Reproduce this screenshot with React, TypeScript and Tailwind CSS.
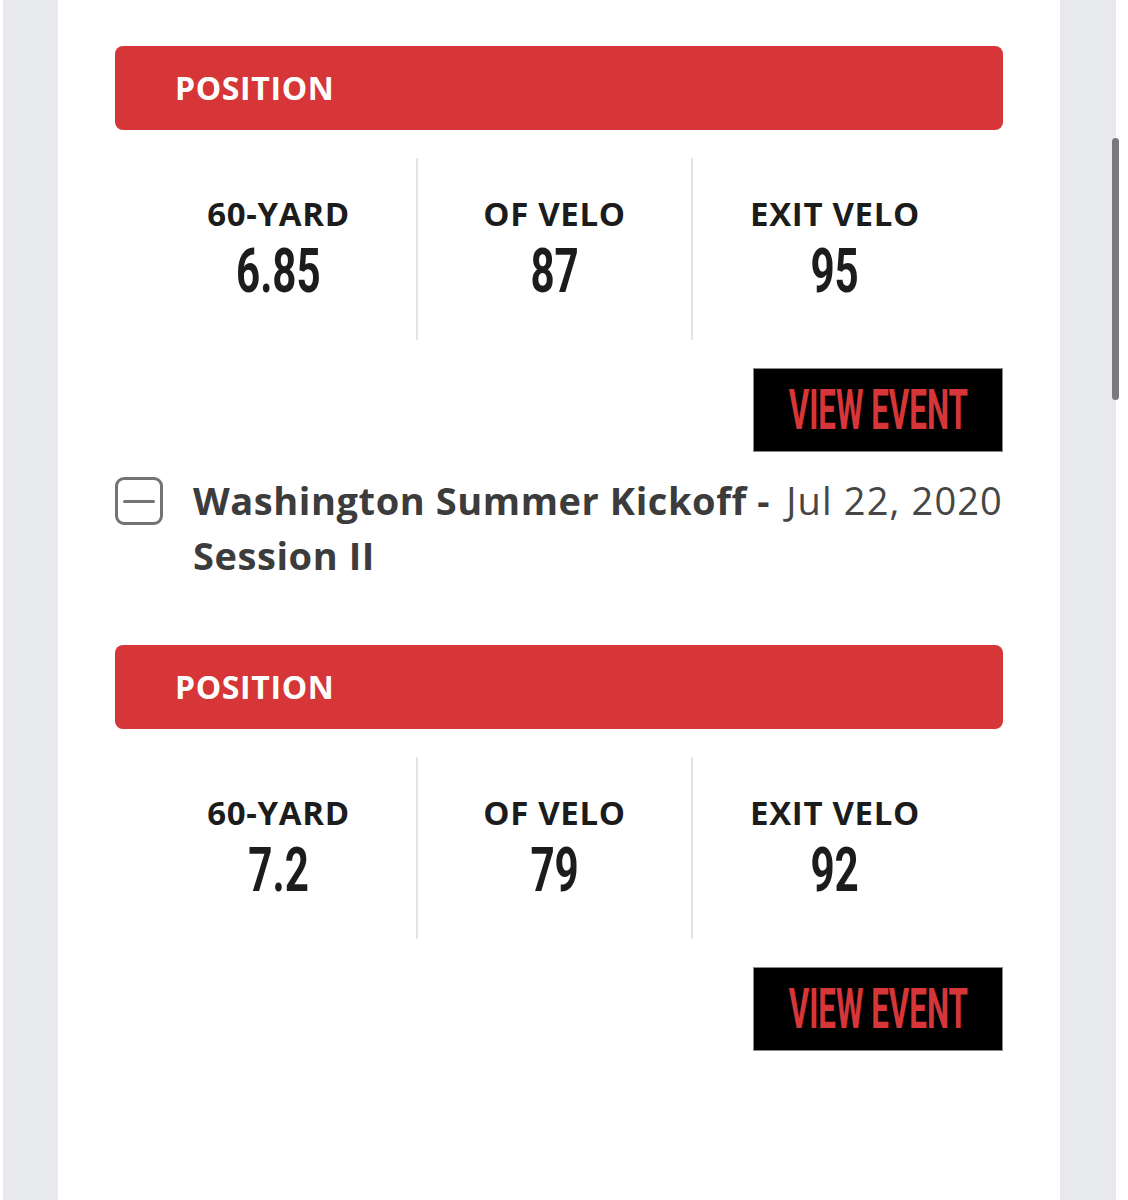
import React from 'react'

type Stat = { label: string; value: string }

type EventBlock = {
  stats: Stat[]
  title?: string
  date?: string
}

const blocks: EventBlock[] = [
  {
    stats: [
      { label: '60-YARD', value: '6.85' },
      { label: 'OF VELO', value: '87' },
      { label: 'EXIT VELO', value: '95' },
    ],
    title: 'Washington Summer Kickoff\u00a0- Session II',
    date: 'Jul 22, 2020',
  },
  {
    stats: [
      { label: '60-YARD', value: '7.2' },
      { label: 'OF VELO', value: '79' },
      { label: 'EXIT VELO', value: '92' },
    ],
  },
]

const sans = "font-['Open_Sans',_'Liberation_Sans',_sans-serif]"
const condensed = "font-['Roboto',_'Liberation_Sans',_sans-serif]"

function StatColumn({ stat, first, last }: { stat: Stat; first?: boolean; last?: boolean }) {
  return (
    <div
      className={
        (last ? 'flex-1 ' : 'w-[275px] ') +
        (first ? '' : 'border-l-2 border-[#e4e4e4] ') +
        'flex flex-col items-center pt-[38px]'
      }
    >
      <div className={`${sans} text-[33px] leading-[36px] font-bold tracking-[0.02em] text-[#1c1c1c]`}>
        {stat.label}
      </div>
      <div className="mt-[15px] h-[48px] flex justify-center">
        <span
          className={`${condensed} inline-block text-[62px] leading-[48px] font-bold text-[#1c1c1c] scale-x-[0.68]`}
        >
          {stat.value}
        </span>
      </div>
    </div>
  )
}

function Block({ block }: { block: EventBlock }) {
  return (
    <div className="flex flex-col">
      {/* красная плашка позиции */}
      <div className="h-[84px] rounded-lg bg-[#d63638] flex items-center pl-[60px]">
        <span className={`${sans} text-[32px] font-bold tracking-[0.02em] text-white leading-none`}>POSITION</span>
      </div>

      {/* показатели */}
      <div className="mt-[28px] h-[182px] flex pl-[26px] pr-[26px]">
        {block.stats.map((s, i) => (
          <StatColumn key={s.label} stat={s} first={i === 0} last={i === block.stats.length - 1} />
        ))}
      </div>

      <div className="mt-[28px] flex justify-end">
        <button className="w-[250px] h-[84px] bg-black border border-[#8a8a8a] flex items-center justify-center overflow-hidden">
          <span
            className={`${condensed} inline-block text-[55px] leading-none font-bold text-[#d63638] scale-x-[0.57] whitespace-nowrap`}
          >
            VIEW EVENT
          </span>
        </button>
      </div>

      {block.title && (
        <div className="mt-[21px] flex items-start">
          <div className="mt-[4px] w-[48px] h-[48px] shrink-0 border-[3px] border-[#737373] rounded-[9px] flex items-center justify-center">
            <div className="w-[32px] h-[3px] rounded-full bg-[#737373]" />
          </div>
          <div
            className={`${sans} ml-[30px] flex-1 text-[38px] leading-[55px] font-bold tracking-[0.015em] text-[#3c3c3c]`}
          >
            {block.title}
          </div>
          <div
            className={`${sans} shrink-0 text-[38px] leading-[55px] tracking-[0.03em] text-[#464646] whitespace-nowrap`}
          >
            {block.date}
          </div>
        </div>
      )}
    </div>
  )
}

export default function App() {
  return (
    <div className="relative w-[1128px] h-[1200px] overflow-hidden bg-white flex">
      <div className="w-[3px] shrink-0 bg-white" />
      <div className="w-[55px] shrink-0 bg-[#e8e9ed]" />

      <main className="flex-1 bg-white px-[57px] pt-[46px] flex flex-col gap-[62px]">
        {blocks.map((b, i) => (
          <Block key={i} block={b} />
        ))}
      </main>

      <div className="w-[56px] shrink-0 bg-[#e8e9ed]" />
      <div className="w-[12px] shrink-0 bg-white" />

      {/* полоса прокрутки */}
      <div className="absolute left-[1112px] top-[138px] w-[7px] h-[262px] rounded-full bg-[#7a7a7a]" />
    </div>
  )
}
